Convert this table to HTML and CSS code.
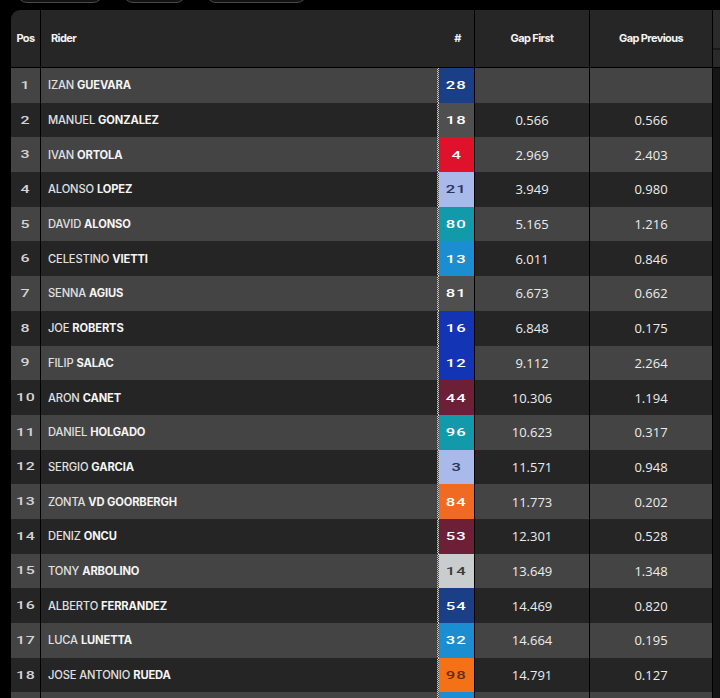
FILE: index.html
```html
<!DOCTYPE html>
<html>
<head>
<meta charset="utf-8">
<link rel="stylesheet" href="styles.css">
</head>
<body>
<div class="pills"><span class="pill p1"></span><span class="pill p2"></span><span class="pill p3"></span></div>
<div class="board">
  <div class="row head">
    <div class="c pos">Pos</div>
    <div class="c rider">Rider</div>
    <div class="c num">#</div>
    <div class="c gap">Gap First</div>
    <div class="c gap">Gap Previous</div>
    <div class="c extra"><div class="extra-top"></div></div>
  </div>
  <div class="row light"><div class="c pos"><span class="dig">1</span></div><div class="c rider">IZAN <b>GUEVARA</b></div><div class="c num"><span class="badge navy"><span class="dig">28</span></span></div><div class="c gap"></div><div class="c gap"></div><div class="c extra"></div></div>
  <div class="row dark"><div class="c pos"><span class="dig">2</span></div><div class="c rider">MANUEL <b>GONZALEZ</b></div><div class="c num"><span class="badge grey"><span class="dig">18</span></span></div><div class="c gap">0.566</div><div class="c gap">0.566</div><div class="c extra"></div></div>
  <div class="row light"><div class="c pos"><span class="dig">3</span></div><div class="c rider">IVAN <b>ORTOLA</b></div><div class="c num"><span class="badge red"><span class="dig">4</span></span></div><div class="c gap">2.969</div><div class="c gap">2.403</div><div class="c extra"></div></div>
  <div class="row dark"><div class="c pos"><span class="dig">4</span></div><div class="c rider">ALONSO <b>LOPEZ</b></div><div class="c num"><span class="badge lav"><span class="dig">21</span></span></div><div class="c gap">3.949</div><div class="c gap">0.980</div><div class="c extra"></div></div>
  <div class="row light"><div class="c pos"><span class="dig">5</span></div><div class="c rider">DAVID <b>ALONSO</b></div><div class="c num"><span class="badge teal"><span class="dig">80</span></span></div><div class="c gap">5.165</div><div class="c gap">1.216</div><div class="c extra"></div></div>
  <div class="row dark"><div class="c pos"><span class="dig">6</span></div><div class="c rider">CELESTINO <b>VIETTI</b></div><div class="c num"><span class="badge sky"><span class="dig">13</span></span></div><div class="c gap">6.011</div><div class="c gap">0.846</div><div class="c extra"></div></div>
  <div class="row light"><div class="c pos"><span class="dig">7</span></div><div class="c rider">SENNA <b>AGIUS</b></div><div class="c num"><span class="badge grey"><span class="dig">81</span></span></div><div class="c gap">6.673</div><div class="c gap">0.662</div><div class="c extra"></div></div>
  <div class="row dark"><div class="c pos"><span class="dig">8</span></div><div class="c rider">JOE <b>ROBERTS</b></div><div class="c num"><span class="badge royal"><span class="dig">16</span></span></div><div class="c gap">6.848</div><div class="c gap">0.175</div><div class="c extra"></div></div>
  <div class="row light"><div class="c pos"><span class="dig">9</span></div><div class="c rider">FILIP <b>SALAC</b></div><div class="c num"><span class="badge royal"><span class="dig">12</span></span></div><div class="c gap">9.112</div><div class="c gap">2.264</div><div class="c extra"></div></div>
  <div class="row dark"><div class="c pos"><span class="dig">10</span></div><div class="c rider">ARON <b>CANET</b></div><div class="c num"><span class="badge maroon"><span class="dig">44</span></span></div><div class="c gap">10.306</div><div class="c gap">1.194</div><div class="c extra"></div></div>
  <div class="row light"><div class="c pos"><span class="dig">11</span></div><div class="c rider">DANIEL <b>HOLGADO</b></div><div class="c num"><span class="badge teal"><span class="dig">96</span></span></div><div class="c gap">10.623</div><div class="c gap">0.317</div><div class="c extra"></div></div>
  <div class="row dark"><div class="c pos"><span class="dig">12</span></div><div class="c rider">SERGIO <b>GARCIA</b></div><div class="c num"><span class="badge lav"><span class="dig">3</span></span></div><div class="c gap">11.571</div><div class="c gap">0.948</div><div class="c extra"></div></div>
  <div class="row light"><div class="c pos"><span class="dig">13</span></div><div class="c rider">ZONTA <b>VD GOORBERGH</b></div><div class="c num"><span class="badge orange"><span class="dig">84</span></span></div><div class="c gap">11.773</div><div class="c gap">0.202</div><div class="c extra"></div></div>
  <div class="row dark"><div class="c pos"><span class="dig">14</span></div><div class="c rider">DENIZ <b>ONCU</b></div><div class="c num"><span class="badge maroon"><span class="dig">53</span></span></div><div class="c gap">12.301</div><div class="c gap">0.528</div><div class="c extra"></div></div>
  <div class="row light"><div class="c pos"><span class="dig">15</span></div><div class="c rider">TONY <b>ARBOLINO</b></div><div class="c num"><span class="badge silver"><span class="dig">14</span></span></div><div class="c gap">13.649</div><div class="c gap">1.348</div><div class="c extra"></div></div>
  <div class="row dark"><div class="c pos"><span class="dig">16</span></div><div class="c rider">ALBERTO <b>FERRANDEZ</b></div><div class="c num"><span class="badge navy"><span class="dig">54</span></span></div><div class="c gap">14.469</div><div class="c gap">0.820</div><div class="c extra"></div></div>
  <div class="row light"><div class="c pos"><span class="dig">17</span></div><div class="c rider">LUCA <b>LUNETTA</b></div><div class="c num"><span class="badge sky"><span class="dig">32</span></span></div><div class="c gap">14.664</div><div class="c gap">0.195</div><div class="c extra"></div></div>
  <div class="row dark"><div class="c pos"><span class="dig">18</span></div><div class="c rider">JOSE ANTONIO <b>RUEDA</b></div><div class="c num"><span class="badge orange2"><span class="dig">98</span></span></div><div class="c gap">14.791</div><div class="c gap">0.127</div><div class="c extra"></div></div>
  <div class="row light"><div class="c pos"></div><div class="c rider"></div><div class="c num"><span class="badge sky"></span></div><div class="c gap"></div><div class="c gap"></div><div class="c extra"></div></div>
</div>
</body>
</html>
```

FILE: styles.css
```css
html, body {
  margin: 0;
  padding: 0;
  background: #000;
  overflow: hidden;
  height: 698px;
}
body {
  font-family: "Inter", "Liberation Sans", sans-serif;
  color: #e6e6e6;
}
.pills {
  display: flex;
  align-items: flex-end;
  gap: 20px;
  height: 3px;
  margin-left: 17px;
}
.pill {
  flex: none;
  height: 26px;
  border: 1px solid #4a4a4a;
  border-radius: 10px;
  background: #121212;
  box-sizing: border-box;
}
.p1 { width: 86px; }
.p2 { width: 63px; }
.p3 { width: 101px; }
.board {
  margin-top: 7px;
  margin-left: 11px;
  width: 709px;
}
.row {
  display: grid;
  grid-template-columns: 30px 396px 38px 115px 123px 7px;
  height: 34.7px;
}
.row.light { background: #444444; }
.row.dark { background: #252525; }
.row.head {
  height: 58px;
  background: #262626;
  border-top-left-radius: 9px;
  box-sizing: border-box;
  border-bottom: 1px solid #000;
}
.c {
  display: flex;
  align-items: center;
  box-sizing: border-box;
  min-width: 0;
  white-space: nowrap;
}
.pos {
  justify-content: center;
  border-right: 1px solid #000;
  font-size: 11px;
  color: #d4d4d4;
}
.rider {
  padding-left: 7px;
  font-size: 11.2px;
  font-weight: 500;
  letter-spacing: -0.15px;
  color: #e0e0e0;
}
.rider b {
  font-weight: 700;
  color: #f4f4f4;
  margin-left: 3px;
}
.num {
  border-right: 1px solid #000;
  align-items: stretch;
}
.row:not(.head) .num::before {
  content: "";
  width: 2px;
  flex: none;
  background: conic-gradient(#d0d0d0 25%, #3a3a3a 0 50%, #d0d0d0 0 75%, #3a3a3a 0) 0 0 / 2px 2px;
}
.gap {
  justify-content: center;
  border-right: 1px solid #000;
  font-family: "Open Sans", "Liberation Sans", sans-serif;
  font-size: 13px;
  color: #ececec;
}
.extra {
  background: #151515;
  align-items: stretch;
  overflow: hidden;
}
.head .c {
  font-weight: 700;
  font-size: 11px;
  letter-spacing: -0.6px;
  color: #f2f2f2;
  padding-bottom: 2px;
}
.head .pos { font-family: "Inter", sans-serif; }
.head .rider { padding-left: 10px; }
.head .num { justify-content: center; align-items: center; padding-left: 4px; }
.head .gap { font-family: "Inter", sans-serif; }
.head .extra {
  background: #2a2a2a;
  flex-direction: column;
  padding: 0;
}
.extra-top {
  height: 38px;
  border-bottom: 2px solid #1a1a1a;
  background: #2b2b2b;
}
.badge {
  flex: 1;
  display: flex;
  align-items: center;
  justify-content: center;
  color: #fff;
}
.dig {
  display: inline-block;
  font-family: "Roboto", sans-serif;
  font-weight: 500;
  font-size: 11.5px;
  letter-spacing: 0.6px;
  transform: scaleX(1.45);
}
.pos .dig { font-size: 11px; }
.navy { background: #1b3f86; }
.grey { background: #4f4f4f; }
.red { background: #e0122b; }
.lav { background: #a9b9ea; color: #2b3358; }
.teal { background: #139aaa; }
.sky { background: #1a8ed0; }
.royal { background: #1434b6; }
.maroon { background: #6d1f37; }
.orange { background: #f06a22; }
.orange2 { background: #f47116; color: #6b2a12; }
.silver { background: #c9cdcd; color: #3a3a3a; }
```
